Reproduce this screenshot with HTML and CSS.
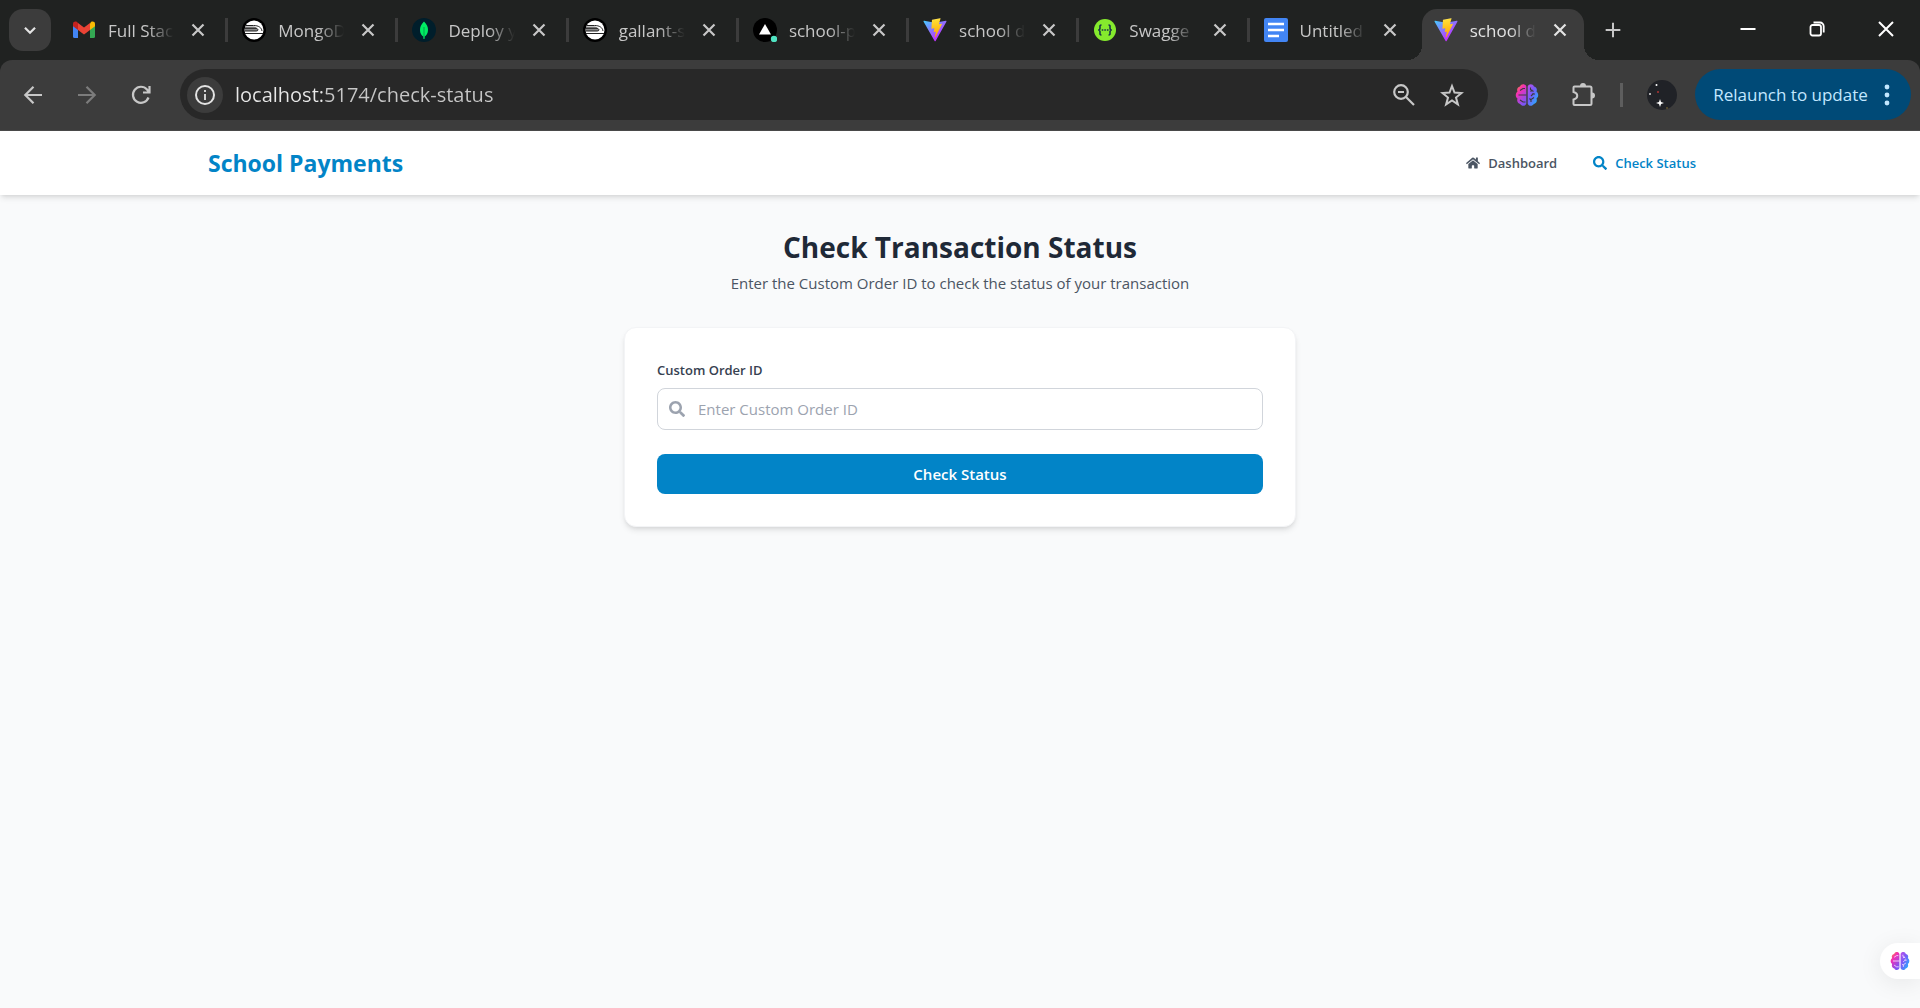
FILE: index.html
```html
<!DOCTYPE html>
<html lang="en">
<head>
<meta charset="utf-8">
<meta name="viewport" content="width=device-width, initial-scale=1">
<title>school payments</title>
<link rel="stylesheet" href="styles.css">
</head>
<body>
<svg class="defs" aria-hidden="true">
  <defs>
    <linearGradient id="vite-a" x1="6" y1="33" x2="235" y2="344" gradientUnits="userSpaceOnUse"><stop stop-color="#41d1ff"/><stop offset="1" stop-color="#bd34fe"/></linearGradient>
    <linearGradient id="vite-b" x1="194" y1="9" x2="236" y2="292" gradientUnits="userSpaceOnUse"><stop stop-color="#ffea83"/><stop offset=".08" stop-color="#ffdd35"/><stop offset="1" stop-color="#ffa800"/></linearGradient>
    <linearGradient id="brain-l" x1="0" y1="0" x2=".6" y2="1"><stop stop-color="#ff9a1f"/><stop offset=".4" stop-color="#f32fb5"/><stop offset="1" stop-color="#7a55f5"/></linearGradient>
    <linearGradient id="brain-r" x1="0" y1="0" x2="1" y2="1"><stop stop-color="#c050e8"/><stop offset=".4" stop-color="#7a5af8"/><stop offset=".9" stop-color="#22b4ff"/></linearGradient>
    <symbol id="x" viewBox="0 0 24 24"><path d="M6.500 6.500l11 11M17.500 6.500l-11 11" fill="none" stroke="currentColor" stroke-width="2.200"/></symbol>
    <symbol id="vite" viewBox="0 0 410 404"><path fill="url(#vite-a)" d="M399.641 59.525L215.643 388.545C211.844 395.338 202.084 395.378 198.228 388.618L10.582 59.556C6.381 52.19 12.68 43.267 21.028 44.759L205.223 77.682C206.398 77.892 207.601 77.89 208.776 77.676L389.119 44.806C397.439 43.289 403.768 52.143 399.641 59.525Z"/><path fill="url(#vite-b)" d="M292.965 1.574L156.801 28.255C154.563 28.694 152.906 30.59 152.771 32.866L144.395 174.33C144.198 177.662 147.258 180.248 150.51 179.498L188.42 170.749C191.967 169.931 195.172 173.055 194.443 176.622L183.18 231.775C182.422 235.487 185.907 238.661 189.532 237.56L212.947 230.446C216.577 229.344 220.065 232.527 219.297 236.242L201.398 322.875C200.278 328.294 207.486 331.249 210.492 326.603L212.5 323.5L323.454 102.072C325.312 98.365 322.108 94.137 318.036 94.923L279.014 102.454C275.347 103.161 272.227 99.746 273.262 96.158L298.731 7.867C299.767 4.273 296.636 .855 292.965 1.574Z"/></symbol>
    <symbol id="train" viewBox="0 0 24 24"><circle cx="12" cy="12" r="12" fill="#000"/><circle cx="12" cy="12" r="9.500" fill="#fff"/><path d="M3 8.500h8.500c3 .3 4.500 2 4.500 4.500H3" fill="#888"/><path d="M3.500 7.500h8c5 0 8 2 8.500 5.500M3 10.300h10c3.500 0 4 2.700 1 2.700H2.500M2.800 15.500h18.500" fill="none" stroke="#222" stroke-width="1"/></symbol>
    <symbol id="brain" viewBox="0 0 24 24"><path fill="url(#brain-l)" d="M11.300 3.500C10.300.5 6 .5 5 3.500 2.500 4 1.500 6.500 2.500 8.500c-2.300 2-2.300 5.500 0 7-1 3 .5 5 2.700 5.500 1.300 2.500 5.300 2.500 6.100-.5z"/><path fill="url(#brain-r)" d="M12.700 3.500c1-3 5.300-3 6.300 0 2.500.5 3.500 3 2.500 5 2.300 2 2.300 5.500 0 7 1 3-.5 5-2.700 5.500-1.300 2.500-5.300 2.500-6.100-.5z"/><path d="M3.500 12h8M5 7.500l3-2h2M5 17l3 2h2.500M15.500 4.500v2l3 2M15.500 8.500l2-1.500M16 13l2-2h2M18 11v-1M16 19v-2.500l3-2M16 17l-1.500-1.500" fill="none" stroke="currentColor" stroke-width="1.100"/></symbol>
    <symbol id="search" viewBox="0 0 512 512"><path fill="currentColor" d="M505 442.7L405.3 343c-4.500-4.500-10.600-7-17-7H372c27.600-35.300 44-79.700 44-128C416 93.100 322.900 0 208 0S0 93.100 0 208s93.100 208 208 208c48.300 0 92.700-16.400 128-44v16.300c0 6.400 2.500 12.500 7 17l99.700 99.700c9.400 9.400 24.600 9.400 33.900 0l28.300-28.300c9.400-9.400 9.400-24.600.1-34zM208 336c-70.700 0-128-57.200-128-128 0-70.700 57.200-128 128-128 70.700 0 128 57.200 128 128 0 70.700-57.200 128-128 128z"/></symbol>
  </defs>
</svg>

<div class="browser">
  <div class="tabstrip">
    <button class="tab-menu" aria-label="Search tabs"><svg viewBox="0 0 24 24" class="icon"><path d="M6.500 9.500l5.500 5.500 5.500-5.500" fill="none" stroke="currentColor" stroke-width="2.400"/></svg></button>
    <div class="tabs">
      <div class="tab">
        <svg class="icon" viewBox="0 0 24 24"><path fill="#4285f4" d="M1 7v11.500A1.500 1.500 0 0 0 2.500 20H6v-9.500z"/><path fill="#34a853" d="M18 20h3.500a1.500 1.500 0 0 0 1.500-1.500V7l-5 3.500z"/><path fill="#fbbc04" d="M18 5.500v6.500l5-3.800V6c0-2.500-2.500-3-4-2z"/><path fill="#ea4335" d="M6 12V5l6 4.500L18 5v7l-6 4.500z"/><path fill="#c5221f" d="M1 6v2.200L6 12V5L5 4C3.500 3 1 3.500 1 6z"/></svg>
        <span class="title">Full Stac</span><button class="close" aria-label="Close tab"><svg class="icon"><use href="#x"/></svg></button>
      </div>
      <div class="tab"><svg class="icon"><use href="#train"/></svg><span class="title">MongoD</span><button class="close" aria-label="Close tab"><svg class="icon"><use href="#x"/></svg></button></div>
      <div class="tab">
        <svg class="icon" viewBox="0 0 24 24"><circle cx="12" cy="12" r="12" fill="#001e2b"/><path fill="#00ed64" d="M12 3.500c3 3 4 5.500 4 8.500 0 3-1.500 5.500-3.300 6.500L12.500 21h-1l-.2-2.500C9.500 17.500 8 15 8 12c0-3 1-5.500 4-8.500z"/><path d="M12 9v10" stroke="#00a34a"/></svg>
        <span class="title">Deploy y</span><button class="close" aria-label="Close tab"><svg class="icon"><use href="#x"/></svg></button>
      </div>
      <div class="tab"><svg class="icon"><use href="#train"/></svg><span class="title">gallant-s</span><button class="close" aria-label="Close tab"><svg class="icon"><use href="#x"/></svg></button></div>
      <div class="tab">
        <svg class="icon" viewBox="0 0 24 24"><circle cx="12" cy="12" r="12" fill="#000"/><path fill="#fff" d="M12 6l6 10.500H6z"/><circle cx="21" cy="21" r="3.200" fill="#50e3c2"/></svg>
        <span class="title">school-p</span><button class="close" aria-label="Close tab"><svg class="icon"><use href="#x"/></svg></button>
      </div>
      <div class="tab"><svg class="icon"><use href="#vite"/></svg><span class="title">school d</span><button class="close" aria-label="Close tab"><svg class="icon"><use href="#x"/></svg></button></div>
      <div class="tab">
        <svg class="icon" viewBox="0 0 24 24"><circle cx="12" cy="12" r="11" fill="#85ea2d"/><path d="M8.500 7C6.500 7 7 8.500 7 10s-.5 2-1.800 2C6.500 12 7 12.500 7 14s-.5 3 1.500 3M15.500 7c2 0 1.500 1.500 1.500 3s.5 2 1.800 2C17.500 12 17 12.500 17 14s.5 3-1.500 3" fill="none" stroke="#173647" stroke-width="1.600"/><path d="M8.700 12h6.800" stroke="#173647" stroke-width="1.600" stroke-dasharray="1.600 1"/></svg>
        <span class="title">Swagge</span><button class="close" aria-label="Close tab"><svg class="icon"><use href="#x"/></svg></button>
      </div>
      <div class="tab">
        <svg class="icon" viewBox="0 0 24 24"><rect width="24" height="24" rx="2" fill="#4285f4"/><path d="M4 6h16M4 12h16M4 18h11" stroke="#fff" stroke-width="2.600"/></svg>
        <span class="title">Untitled</span><button class="close" aria-label="Close tab"><svg class="icon"><use href="#x"/></svg></button>
      </div>
      <div class="tab active"><svg class="icon"><use href="#vite"/></svg><span class="title">school d</span><button class="close" aria-label="Close tab"><svg class="icon"><use href="#x"/></svg></button></div>
    </div>
    <button class="new-tab" aria-label="New tab"><svg class="icon" viewBox="0 0 24 24"><path d="M12 4v16M4 12h16" stroke="currentColor" stroke-width="2.200"/></svg></button>
    <div class="window-controls">
      <button aria-label="Minimize"><svg class="icon" viewBox="0 0 24 24"><path d="M4.500 12h15" stroke="currentColor" stroke-width="2"/></svg></button>
      <button aria-label="Restore"><svg class="icon" viewBox="0 0 24 24"><rect x="5.500" y="8" width="10.500" height="10.500" rx="2" fill="none" stroke="currentColor" stroke-width="1.800"/><path d="M8.500 5.500H15a3.700 3.700 0 0 1 3.700 3.700v6.300" fill="none" stroke="currentColor" stroke-width="1.800"/></svg></button>
      <button aria-label="Close"><svg class="icon" viewBox="0 0 24 24"><path d="M5 5l14 14M19 5L5 19" stroke="currentColor" stroke-width="2"/></svg></button>
    </div>
  </div>

  <div class="toolbar">
    <div class="nav-buttons">
      <button aria-label="Back"><svg class="icon" viewBox="0 0 24 24"><path d="M21 12H4.500M12.500 3.800L4.300 12l8.200 8.200" fill="none" stroke="currentColor" stroke-width="2.200"/></svg></button>
      <button aria-label="Forward" disabled><svg class="icon" viewBox="0 0 24 24"><path d="M3 12h16.500M11.500 3.800l8.200 8.200-8.200 8.200" fill="none" stroke="currentColor" stroke-width="2.200"/></svg></button>
      <button aria-label="Reload"><svg class="icon" viewBox="0 0 24 24"><path d="M19.500 14.500A8 8 0 1 1 18 6.500l2 2.500M20.500 3v6.500H14" fill="none" stroke="currentColor" stroke-width="2.200"/></svg></button>
    </div>
    <div class="omnibox">
      <button class="site-info" aria-label="Site information"><svg class="icon" viewBox="0 0 24 24"><circle cx="12" cy="12" r="9" fill="none" stroke="currentColor" stroke-width="2"/><path d="M12 11v6M12 7v2" stroke="currentColor" stroke-width="1.800"/></svg></button>
      <input class="url" type="text" aria-label="Address" value="localhost:5174/check-status">
      <button aria-label="Zoom"><svg class="icon" viewBox="0 0 24 24"><circle cx="9" cy="9" r="6.800" fill="none" stroke="currentColor" stroke-width="2.200"/><path d="M6 9h6M14 14l8 8" stroke="currentColor" stroke-width="2.200"/></svg></button>
      <button aria-label="Bookmark"><svg class="icon" viewBox="0 0 24 24"><path d="M12 3l2.500 6.600 7 .4-5.500 4.500 1.900 6.900-5.900-3.900-5.900 3.900L8 14.500 2.500 10l7-.4z" fill="none" stroke="currentColor" stroke-width="2"/></svg></button>
    </div>
    <div class="extensions">
      <button class="brain" aria-label="Assistant extension"><svg class="icon"><use href="#brain"/></svg></button>
      <button aria-label="Extensions"><svg class="icon" viewBox="0 0 24 24"><path d="M2.500 4.500a1 1 0 0 1 1-1H19a1.500 1.500 0 0 1 1.500 1.500v15.500A1.500 1.500 0 0 1 19 22H3.500a1 1 0 0 1-1-1v-4.500c5-1 5-6.500 0-7.500z" fill="none" stroke="currentColor" stroke-width="2"/><path d="M9 3a3 3 0 0 1 6 0zM21 9.500a3 3 0 0 1 0 6z" fill="currentColor"/></svg></button>
      <span class="divider"></span>
      <button class="avatar" aria-label="Profile"><svg viewBox="0 0 30 30" width="30" height="30"><circle cx="15" cy="15" r="15" fill="#202227"/><circle cx="9.500" cy="5" r="1" fill="#fff"/><circle cx="3" cy="14" r="1" fill="#ddd"/><circle cx="11" cy="12" r="1" fill="#a33"/><path d="M13 19l1 3 3 1-3 1-1 3-1-3-3-1 3-1z" fill="#fff"/><circle cx="20" cy="28" r=".7" fill="#a83"/></svg></button>
    </div>
    <button class="relaunch">Relaunch to update<svg width="6" height="24" viewBox="0 0 6 24"><g fill="currentColor"><circle cx="3" cy="4" r="2.400"/><circle cx="3" cy="12" r="2.400"/><circle cx="3" cy="20" r="2.400"/></g></svg></button>
  </div>
</div>

<div class="page">
  <header class="site-header">
    <div class="container">
      <a class="brand" href="#">School Payments</a>
      <nav class="site-nav">
        <a href="#"><svg width="14" height="14" viewBox="0 0 576 512"><path fill="currentColor" d="M280.37 148.26L96 300.11V464a16 16 0 0 0 16 16l112.060-.29a16 16 0 0 0 15.920-16V368a16 16 0 0 1 16-16h64a16 16 0 0 1 16 16v95.640a16 16 0 0 0 16 16.050L464 480a16 16 0 0 0 16-16V300L295.670 148.260a12.190 12.190 0 0 0-15.300 0zM571.600 251.470L488 182.560V44.050a12 12 0 0 0-12-12h-56a12 12 0 0 0-12 12v72.610L318.470 43a48 48 0 0 0-61 0L4.340 251.470a12 12 0 0 0-1.600 16.900l25.500 31A12 12 0 0 0 45.150 301l235.220-193.740a12.190 12.190 0 0 1 15.300 0L530.900 301a12 12 0 0 0 16.900-1.600l25.500-31a12 12 0 0 0-1.700-16.930z"/></svg>Dashboard</a>
        <a href="#" class="current"><svg width="14" height="14"><use href="#search"/></svg>Check Status</a>
      </nav>
    </div>
  </header>
  <main class="content">
    <h1>Check Transaction Status</h1>
    <p class="lead">Enter the Custom Order ID to check the status of your transaction</p>
    <form class="card">
      <label for="order-id">Custom Order ID</label>
      <div class="field">
        <svg width="16" height="16"><use href="#search"/></svg>
        <input id="order-id" type="text" placeholder="Enter Custom Order ID">
      </div>
      <button type="button" class="submit">Check Status</button>
    </form>
  </main>
  <button class="assistant" aria-label="Open assistant"><svg width="20" height="20"><use href="#brain"/></svg></button>
</div>
</body>
</html>
```

FILE: styles.css
```css
* { box-sizing: border-box; }
body {
  margin: 0;
  min-height: 100vh;
  display: flex;
  flex-direction: column;
  font-family: "Open Sans", "Noto Sans", sans-serif;
  background: #f9fafb;
}
button, input { font: inherit; color: inherit; margin: 0; padding: 0; border: 0; background: none; }
button { display: flex; align-items: center; justify-content: center; flex: none; }
a { color: inherit; text-decoration: none; }
svg { display: block; flex: none; }
.icon { width: 24px; height: 24px; }
.defs { position: absolute; width: 0; height: 0; }

/* Browser tab strip */
.browser { background: #202221; color: #c7c7c7; }
.tabstrip { display: flex; height: 60px; padding: 9px 0 0 9px; }
.tab-menu { width: 42px; height: 42px; border-radius: 14px; background: #3c3c3c; color: #e3e3e3; }
.tab-menu .icon { width: 22px; height: 22px; }
.tabs {
  flex: 0 1 1524px;
  min-width: 0;
  margin-left: 9px;
  display: grid;
  grid-template-columns: repeat(9, minmax(0, 1fr));
  gap: 8px;
}
.tab { position: relative; display: flex; align-items: center; gap: 12px; padding: 0 12px 9px; height: 51px; }
.tab::after {
  content: "";
  position: absolute;
  top: 9px;
  right: -6px;
  width: 3px;
  height: 24px;
  background: #3c3c3c;
}
.tab:nth-last-child(2)::after { display: none; }
.title {
  flex: 1;
  min-width: 0;
  overflow: hidden;
  white-space: nowrap;
  font-size: 17px;
  line-height: 24px;
  padding-top: 2px;
  mask-image: linear-gradient(to right, #000 60%, transparent);
}
.active { background: #3c3c3c; border-radius: 15px 15px 0 0; color: #e3e3e3; }
.active::before, .active::after {
  content: "";
  position: absolute;
  top: auto;
  bottom: 0;
  width: 15px;
  height: 15px;
}
.active::before { left: -15px; background: radial-gradient(circle at 0 0, transparent 15px, #3c3c3c 15px); }
.active::after { right: -15px; background: radial-gradient(circle at 100% 0, transparent 15px, #3c3c3c 15px); }
.new-tab { width: 42px; height: 42px; margin-left: 8px; }
.new-tab .icon { width: 22px; height: 22px; }
.window-controls { display: flex; height: 40px; margin-left: auto; color: #fff; }
.window-controls button { width: 69px; }

/* Address bar row */
.toolbar {
  display: flex;
  align-items: center;
  height: 71px;
  padding: 0 9px 1px 12px;
  background: #3c3c3c;
  border-bottom: 1px solid #4a4a4a;
  border-radius: 12px 12px 0 0;
}
.nav-buttons { display: flex; gap: 12px; margin-right: 18px; }
.nav-buttons button { width: 42px; height: 42px; }
.nav-buttons button:disabled { color: #7c7c7c; }
.omnibox {
  flex: 1;
  display: flex;
  align-items: center;
  height: 51px;
  padding: 0 24px 0 7px;
  gap: 24px;
  border-radius: 26px;
  background: #282828;
}
.site-info { width: 36px; height: 36px; border-radius: 50%; background: #3c3c3c; color: #e3e3e3; }
.url {
  flex: 1;
  min-width: 0;
  height: 32px;
  margin-left: -12px;
  font-size: 20px;
  color: transparent;
  background: linear-gradient(to right, #e8e8e8 88px, #c7c7c7 88px);
  background-clip: text;
}
.extensions { display: flex; align-items: center; margin: 0 18px 0 27px; }
.extensions button:nth-child(2) { margin: 0 25px 0 32px; }
.brain { color: #3c3c3c; }
.divider { width: 3px; height: 24px; margin-right: 24px; background: #5e5e5e; }
.relaunch {
  width: 216px;
  height: 51px;
  gap: 16px;
  padding-right: 3px;
  border-radius: 26px;
  background: #004a77;
  color: #c2e7ff;
  font-size: 17px;
}

/* Page */
.page { flex: 1; position: relative; color: #1f2937; }
.site-header { background: #fff; box-shadow: 0 4px 6px -1px #0000001a, 0 2px 4px -2px #0000001a; }
.container {
  max-width: 1536px;
  height: 64px;
  margin: 0 auto;
  padding: 0 16px;
  display: flex;
  align-items: center;
  justify-content: space-between;
}
.brand { color: #0284c7; font-size: 23px; font-weight: 700; }
.site-nav { display: flex; gap: 4px; font-size: 13px; font-weight: 600; color: #4b5563; }
.site-nav a { display: flex; align-items: center; gap: 8px; padding: 8px 16px; }
.site-nav .current { color: #0284c7; }
.content { max-width: 704px; margin: 0 auto; padding: 32px 16px; }
h1 { margin: 0 0 4px; font-size: 28px; line-height: 40px; font-weight: 700; text-align: center; }
.lead { margin: 0 0 32px; font-size: 15px; line-height: 24px; text-align: center; color: #4b5563; }
.card {
  display: flex;
  flex-direction: column;
  padding: 32px;
  border: 1px solid #f3f4f6;
  border-radius: 12px;
  background: #fff;
  box-shadow: 0 4px 6px -1px #0000001a, 0 2px 4px -2px #0000001a;
}
.card label { margin-bottom: 8px; font-size: 13px; line-height: 20px; font-weight: 600; color: #374151; }
.field {
  display: flex;
  align-items: center;
  gap: 13px;
  height: 42px;
  margin-bottom: 24px;
  padding: 0 11px;
  border: 1px solid #d1d5db;
  border-radius: 8px;
  color: #9ca3af;
}
.field input { flex: 1; min-width: 0; height: 40px; font-size: 15px; color: #1f2937; }
.field input::placeholder { color: #9ca3af; }
.submit { height: 40px; border-radius: 8px; background: #0284c7; color: #fff; font-size: 15px; font-weight: 600; }
.assistant {
  position: absolute;
  right: 0;
  bottom: 29px;
  width: 40px;
  height: 36px;
  border-radius: 18px 0 0 18px;
  background: #fff;
  color: #f3d8ff;
  box-shadow: 0 4px 24px #00000014;
}
```
